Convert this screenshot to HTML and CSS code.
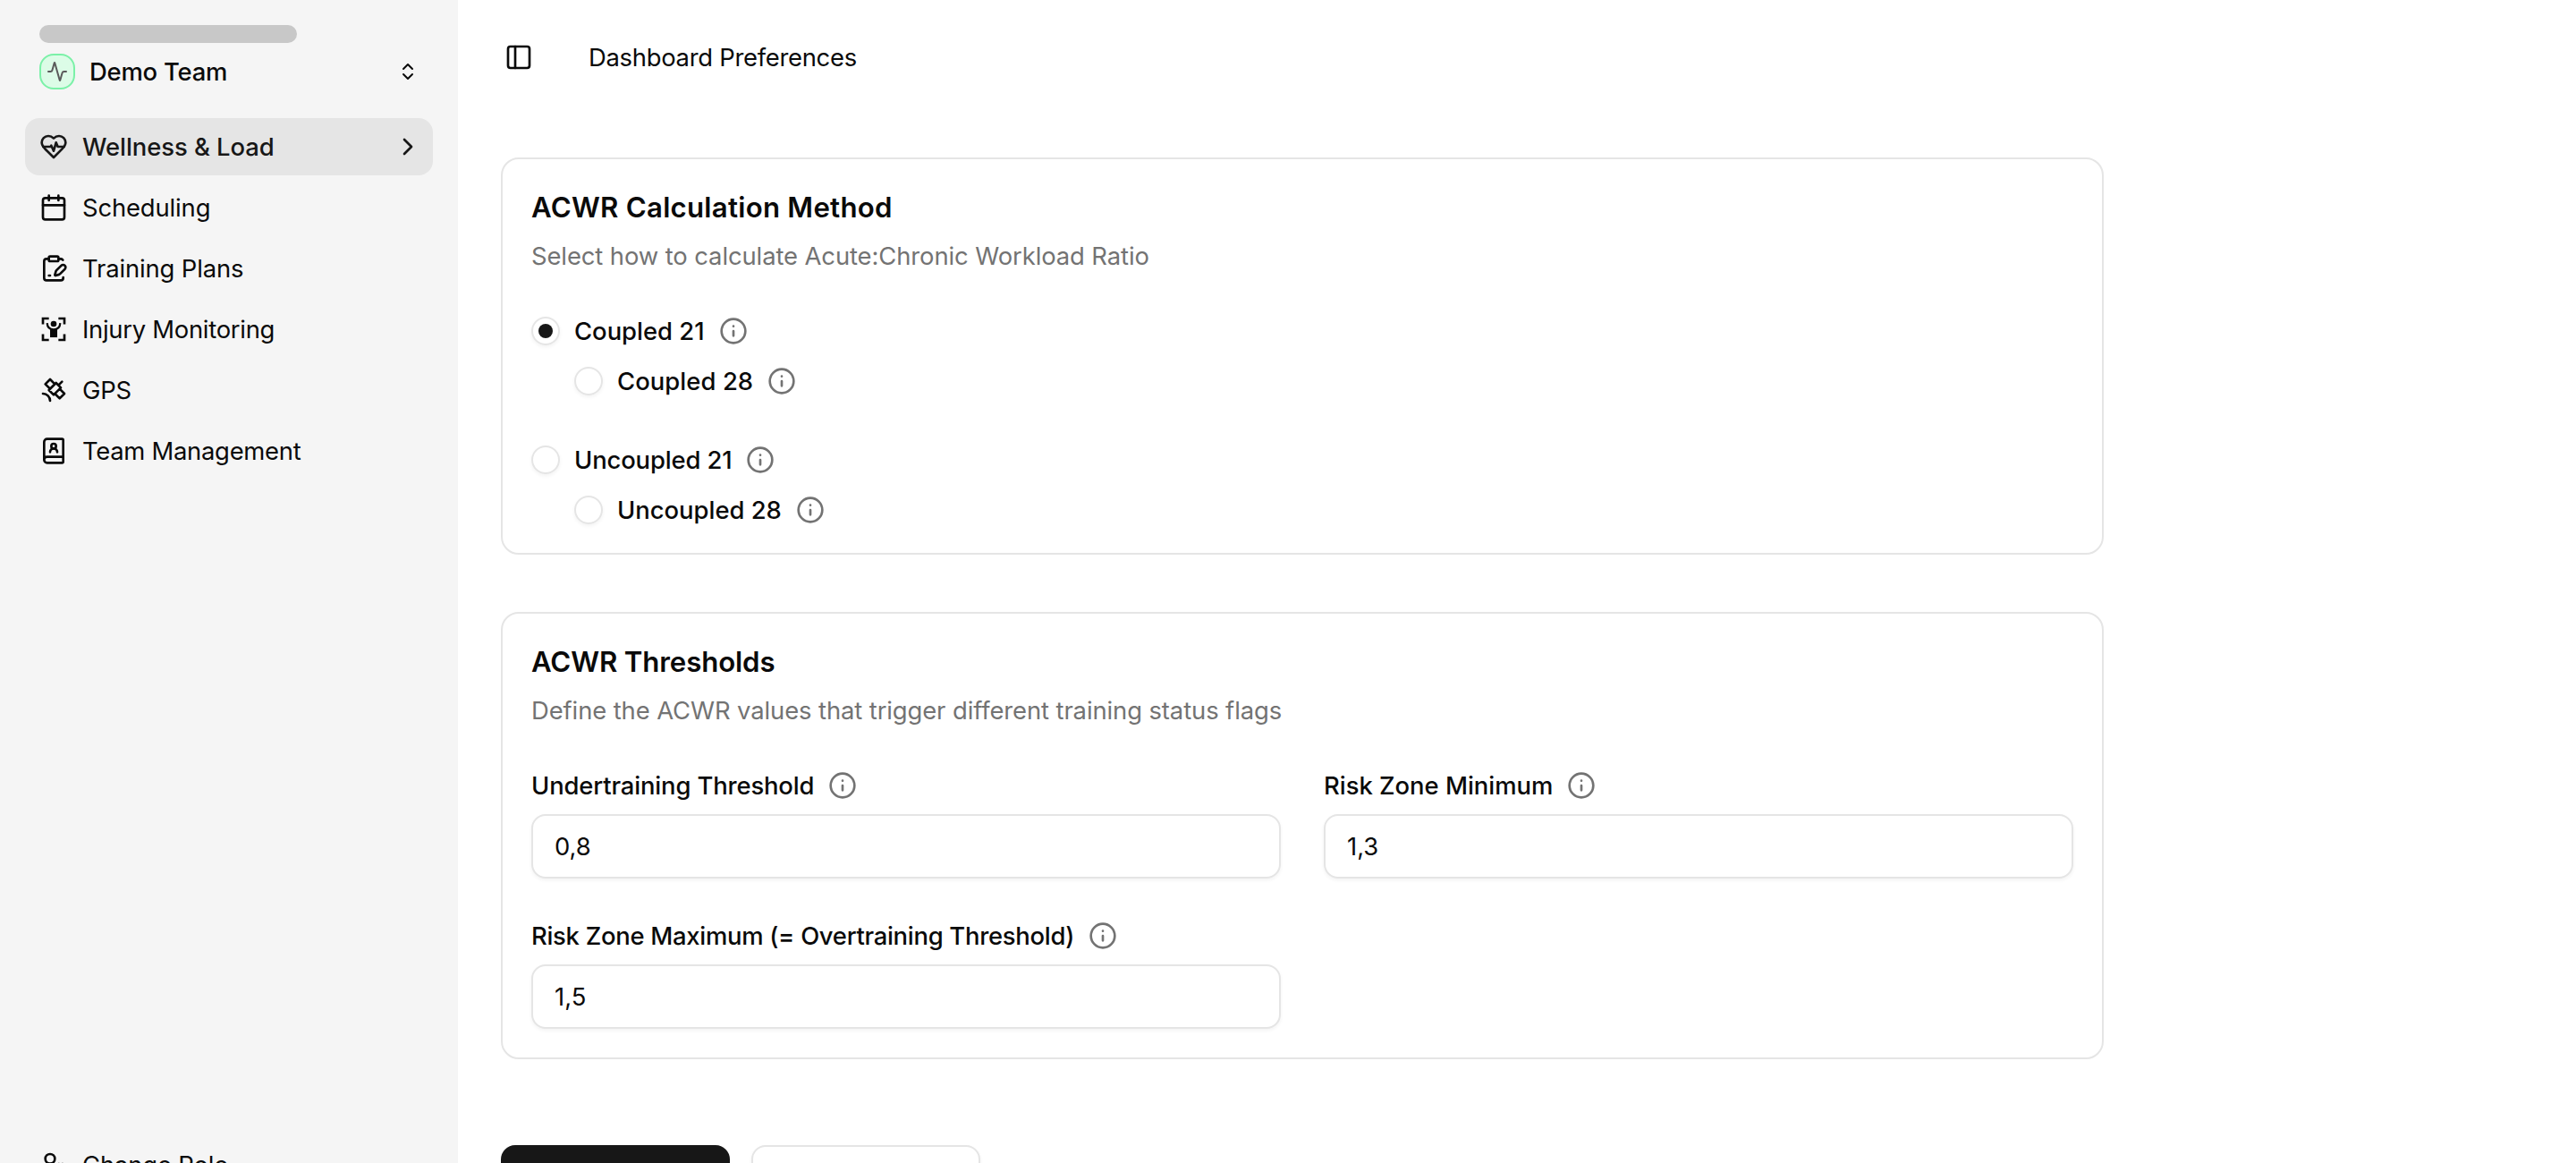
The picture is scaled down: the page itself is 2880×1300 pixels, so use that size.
FILE: index.html
```
<!DOCTYPE html>
<html lang="en">
<head>
<meta charset="utf-8">
<title>Dashboard Preferences</title>
<link rel="stylesheet" href="styles.css">
</head>
<body>
<svg class="sprite" aria-hidden="true">
  <symbol id="info" viewBox="0 0 24 24"><circle cx="12" cy="12" r="10"/><path d="M12 16v-4M12 8h.01"/></symbol>
</svg>
<div class="app">
  <aside class="sidebar">
    <div class="placeholder"></div>
    <div class="team">
      <span class="team-logo"><svg class="icon small" viewBox="0 0 24 24"><path d="M22 12h-2.48a2 2 0 0 0-1.93 1.46l-2.35 8.36a.25.25 0 0 1-.48 0L9.24 2.18a.25.25 0 0 0-.48 0l-2.35 8.36A2 2 0 0 1 4.49 12H2"/></svg></span>
      <span class="team-name">Demo Team</span>
      <svg class="icon small" viewBox="0 0 24 24"><path d="m7 15 5 5 5-5M7 9l5-5 5 5"/></svg>
    </div>
    <nav class="nav">
      <a class="nav-item active">
        <svg class="icon" viewBox="0 0 24 24"><path d="M19 14c1.49-1.46 3-3.21 3-5.5A5.5 5.5 0 0 0 16.5 3c-1.76 0-3 .5-4.5 2-1.5-1.5-2.74-2-4.5-2A5.5 5.5 0 0 0 2 8.5c0 2.3 1.5 4.05 3 5.5l7 7Z"/><path d="M3.22 12H9.5l.5-1 2 4.5 2-7 1.5 3.5h5.27"/></svg>
        <span class="nav-label">Wellness &amp; Load</span>
        <svg class="icon" viewBox="0 0 24 24"><path d="m9 18 6-6-6-6"/></svg>
      </a>
      <a class="nav-item">
        <svg class="icon" viewBox="0 0 24 24"><path d="M8 2v4M16 2v4M3 10h18"/><rect width="18" height="18" x="3" y="4" rx="2"/></svg>
        <span class="nav-label tight">Scheduling</span>
      </a>
      <a class="nav-item">
        <svg class="icon" viewBox="0 0 24 24"><rect width="8" height="4" x="8" y="2" rx="1"/><path d="M8 4H6a2 2 0 0 0-2 2v14a2 2 0 0 0 2 2h12a2 2 0 0 0 2-2v-.5M16 4h2a2 2 0 0 1 1.73 1M8 18h1"/><path d="M21.378 12.626a1 1 0 0 0-3.004-3.004l-4.01 4.012a2 2 0 0 0-.506.854l-.837 2.87a.5.5 0 0 0 .62.62l2.87-.837a2 2 0 0 0 .854-.506z"/></svg>
        <span class="nav-label tight">Training Plans</span>
      </a>
      <a class="nav-item">
        <svg class="icon butt" viewBox="0 0 24 24"><path d="M8 3H3v4.8M16 3h5v4.8M8 21H3v-4.8M16 21h5v-4.8"/><path d="M6.5 6.8c.2 3.2 2.2 5.4 5.5 5.4s5.300-2.200 5.500-5.400" stroke-width="1.700"/><circle class="solid" cx="12" cy="7.500" r="2.500"/><path class="solid" d="M9 12h6v6.800H9z"/></svg>
        <span class="nav-label tighter">Injury Monitoring</span>
      </a>
      <a class="nav-item">
        <svg class="icon" viewBox="0 0 24 24"><path d="M13 7 9 3 5 7l4 4M17 11l4 4-4 4-4-4M8 12l4 4 6-6-4-4ZM16 8l3-3M9 21a6 6 0 0 0-6-6"/></svg>
        <span class="nav-label tighter">GPS</span>
      </a>
      <a class="nav-item">
        <svg class="icon" viewBox="0 0 24 24"><path d="M15 13a3 3 0 1 0-6 0"/><path d="M4 19.5v-15A2.5 2.5 0 0 1 6.500 2H19a1 1 0 0 1 1 1v18a1 1 0 0 1-1 1H6.500a1 1 0 0 1 0-5H20"/><circle cx="12" cy="8" r="2"/></svg>
        <span class="nav-label tighter">Team Management</span>
      </a>
    </nav>
    <div class="sidebar-footer">
      <a class="nav-item">
        <svg class="icon" viewBox="0 0 24 24"><circle cx="18" cy="15" r="3"/><circle cx="9" cy="7" r="4"/><path d="M10 15H6a4 4 0 0 0-4 4v2M21.700 16.400l-.9-.3M15.200 13.900l-.9-.3M16.600 18.700l.3-.9M19.100 12.200l.3-.9M19.600 18.700l-.4-1M16.800 12.300l-.4-1M14.300 16.600l1-.4M20.700 13.800l1-.4"/></svg>
        <span class="nav-label tight">Change Role</span>
      </a>
    </div>
  </aside>

  <main class="main">
    <header class="topbar">
      <svg class="icon" viewBox="0 0 24 24"><rect width="18" height="18" x="3" y="3" rx="2"/><path d="M9 3v18"/></svg>
      <h1 class="page-title">Dashboard Preferences</h1>
    </header>

    <form class="cards">
      <section class="card">
        <h2 class="card-title wide">ACWR Calculation Method</h2>
        <p class="card-desc">Select how to calculate Acute:Chronic Workload Ratio</p>
        <div class="methods">
          <div class="method-group">
            <label class="method"><span class="radio checked"></span><span class="label">Coupled 21</span><svg class="icon info"><use href="#info"/></svg></label>
            <label class="method nested"><span class="radio"></span><span class="label loose">Coupled 28</span><svg class="icon info"><use href="#info"/></svg></label>
          </div>
          <div class="method-group">
            <label class="method"><span class="radio"></span><span class="label tight">Uncoupled 21</span><svg class="icon info"><use href="#info"/></svg></label>
            <label class="method nested"><span class="radio"></span><span class="label">Uncoupled 28</span><svg class="icon info"><use href="#info"/></svg></label>
          </div>
        </div>
      </section>

      <section class="card">
        <h2 class="card-title">ACWR Thresholds</h2>
        <p class="card-desc">Define the ACWR values that trigger different training status flags</p>
        <div class="fields">
          <div class="field">
            <div class="field-label"><span class="label tight">Undertraining Threshold</span><svg class="icon info"><use href="#info"/></svg></div>
            <input class="input" type="text" value="0,8">
          </div>
          <div class="field">
            <div class="field-label"><span class="label">Risk Zone Minimum</span><svg class="icon info"><use href="#info"/></svg></div>
            <input class="input" type="text" value="1,3">
          </div>
          <div class="field">
            <div class="field-label"><span class="label tighter">Risk Zone Maximum (= Overtraining Threshold)</span><svg class="icon info"><use href="#info"/></svg></div>
            <input class="input" type="text" value="1,5">
          </div>
        </div>
      </section>

      <div class="actions">
        <button class="button primary" type="button"></button>
        <button class="button outline" type="button"></button>
      </div>
    </form>
  </main>
</div>
</body>
</html>
```
FILE: styles.css
```
* { box-sizing: border-box; }

body {
  margin: 0;
  height: 1300px;
  overflow: hidden;
  background: #fff;
  color: #0a0a0a;
  font: 400 27.4px/40px Inter, "Liberation Sans", sans-serif;
}

.sprite { display: none; }

.app { display: flex; height: 1362px; }

.icon {
  flex: none;
  width: 32px;
  height: 32px;
  fill: none;
  stroke: currentColor;
  stroke-width: 2;
  stroke-linecap: round;
  stroke-linejoin: round;
}
.icon.small { width: 24px; height: 24px; }
.icon.butt { stroke-linecap: butt; stroke-linejoin: miter; }
.icon.info { color: #737373; }
.solid { fill: currentColor; stroke: none; }

/* Sidebar */
.sidebar {
  display: flex;
  flex-direction: column;
  flex: none;
  width: 512px;
  padding: 28px;
  background: #f5f5f5;
}

.placeholder {
  width: 288px;
  height: 20px;
  margin-left: 16px;
  border-radius: 10px;
  background: #c8c8c8;
}

.team {
  display: flex;
  align-items: center;
  gap: 16px;
  height: 40px;
  margin: 12px 16px 32px;
}

.team-logo {
  display: flex;
  align-items: center;
  justify-content: center;
  width: 40px;
  height: 40px;
  border: 2px solid #7bf1a8;
  border-radius: 16px;
  background: #dcfce7;
  color: #5a5a5a;
}

.team-name { flex: 1; font-weight: 500; letter-spacing: -0.2px; }

.nav { display: flex; flex-direction: column; gap: 4px; }

.nav-item {
  display: flex;
  align-items: center;
  gap: 16px;
  height: 64px;
  padding: 0 12px 0 16px;
  border-radius: 16px;
}
.nav-item.active { background: #e5e5e5; color: #171717; font-weight: 500; }

.nav-label { flex: 1; letter-spacing: -0.05px; }
.tight { letter-spacing: -0.13px; }
.tighter { letter-spacing: -0.27px; }
.loose { letter-spacing: 0.08px; }

.sidebar-footer { margin-top: auto; }

/* Content */
.main { flex: 1; padding: 0 48px; }

.topbar {
  display: flex;
  align-items: center;
  gap: 62px;
  height: 128px;
  padding-left: 4px;
}

.page-title { margin: 0; font-size: inherit; font-weight: 400; letter-spacing: -0.28px; }

.cards { display: flex; flex-direction: column; gap: 64px; width: 1792px; margin-top: 48px; }

.card { padding: 32px; border: 2px solid #e5e5e5; border-radius: 20px; }

.card-title { margin: 0 0 11px; font-size: 31.2px; font-weight: 600; line-height: 45px; letter-spacing: -0.12px; }
.card-title.wide { letter-spacing: 0.26px; }

.card-desc { margin: 0 0 48px; color: #737373; letter-spacing: -0.09px; }

.methods { display: flex; flex-direction: column; gap: 56px; }
.method-group { display: flex; flex-direction: column; gap: 24px; }
.method { display: flex; align-items: center; gap: 16px; height: 32px; }
.method.nested { margin-left: 48px; }

.label { font-weight: 500; }

.radio {
  display: flex;
  align-items: center;
  justify-content: center;
  width: 32px;
  height: 32px;
  border: 2px solid #e5e5e5;
  border-radius: 50%;
  box-shadow: 0 2px 4px rgba(0, 0, 0, 0.05);
}
.radio.checked::before { content: ""; width: 16px; height: 16px; border-radius: 50%; background: #171717; }

.fields { display: grid; grid-template-columns: 1fr 1fr; gap: 48px; }
.field { display: flex; flex-direction: column; gap: 16px; }
.field-label { display: flex; align-items: center; gap: 16px; height: 32px; }

.input {
  width: 100%;
  height: 72px;
  padding: 0 24px;
  border: 2px solid #e5e5e5;
  border-radius: 16px;
  background: #fff;
  box-shadow: 0 2px 4px rgba(0, 0, 0, 0.05);
  color: inherit;
  font: inherit;
}

.actions { display: flex; gap: 24px; margin-top: 32px; }

.button { width: 256px; height: 72px; border-radius: 16px; }
.button.primary { border: 0; background: #171717; }
.button.outline { border: 2px solid #e5e5e5; background: #fff; box-shadow: 0 2px 4px rgba(0, 0, 0, 0.05); }
```
